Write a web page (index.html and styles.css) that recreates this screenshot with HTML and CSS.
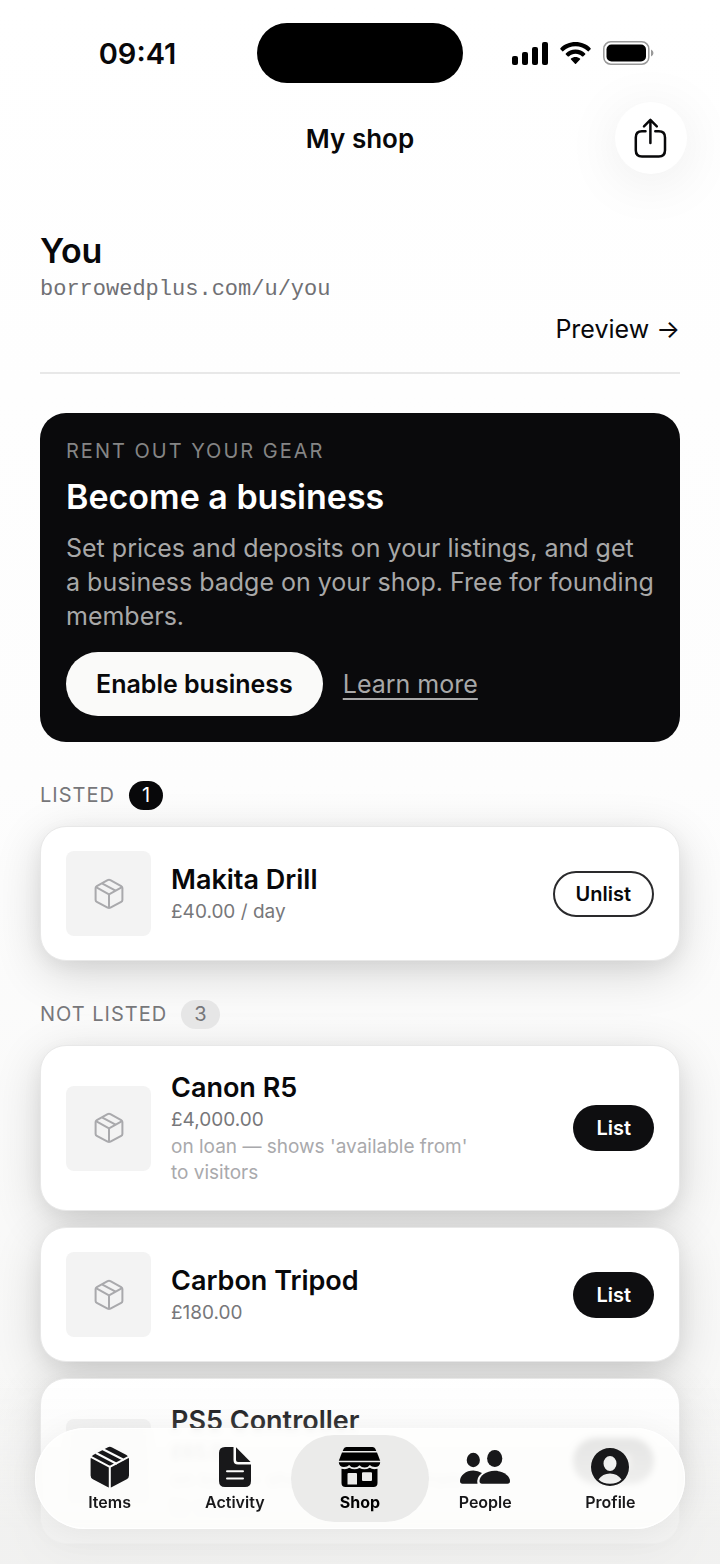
FILE: index.html
```html
<!DOCTYPE html>
<html lang="en">
<head>
    <meta charset="UTF-8">
    <meta name="viewport" content="width=device-width, initial-scale=1.0">
    <title>My shop</title>
    <link rel="stylesheet" href="styles.css">
</head>
<body>
    <!-- Shared icons -->
    <svg class="sprite" aria-hidden="true">
        <symbol id="box" viewBox="0 0 30 32">
            <path d="M13.6 2.2 2.8 8.1Q1.6 8.8 1.6 10.1V21.9Q1.6 23.2 2.8 23.8L13.6 29.7Q15 30.4 16.4 29.7L27.2 23.8Q28.4 23.2 28.4 21.9V10.1Q28.4 8.8 27.2 8.1L16.4 2.2Q15 1.5 13.6 2.2Z"/>
            <path d="M2 9.2 15 16.3 28 9.2M15 16.3V30M8.4 5.6 21.6 12.7"/>
        </symbol>
    </svg>

    <div class="status-bar">
        <span class="time">09:41</span>
        <span class="island"></span>
        <span class="status-icons">
            <svg width="36" height="23" viewBox="0 0 36 23">
                <rect x="0" y="14" width="6" height="9" rx="2"/>
                <rect x="10" y="10" width="6" height="13" rx="2"/>
                <rect x="20" y="5" width="6" height="18" rx="2"/>
                <rect x="30" y="0" width="6" height="23" rx="2"/>
            </svg>
            <svg width="31" height="23" viewBox="0 0 31 23">
                <path d="M15.5 0C9.5 0 4 2.3 0.4 6.2Q0 6.7 0.4 7.2L2.4 9.2Q2.9 9.6 3.4 9.1C6.6 5.9 10.9 4.3 15.5 4.3S24.4 5.9 27.6 9.1Q28.1 9.6 28.6 9.2L30.6 7.2Q31 6.7 30.6 6.2C27 2.3 21.5 0 15.5 0Z"/>
                <path d="M15.5 7.5C11.7 7.5 8.3 9 5.8 11.4Q5.4 11.9 5.8 12.4L7.9 14.4Q8.4 14.8 8.9 14.4C10.7 12.8 13 11.8 15.5 11.8S20.3 12.8 22.1 14.4Q22.6 14.8 23.1 14.4L25.2 12.4Q25.6 11.9 25.2 11.4C22.7 9 19.3 7.5 15.5 7.5Z"/>
                <path d="M15.5 15C13.7 15 12.2 15.6 11 16.6Q10.5 17.1 11 17.6L15 21.7Q15.5 22.2 16 21.7L20 17.6Q20.5 17.1 20 16.6C18.8 15.6 17.3 15 15.5 15Z"/>
            </svg>
            <svg width="51" height="24" viewBox="0 0 51 24">
                <rect x="0.8" y="0.8" width="45" height="22.4" rx="7" fill="none" stroke="#999" stroke-width="1.5"/>
                <rect x="3.5" y="3.5" width="39.5" height="17" rx="5"/>
                <path d="M48 8.5Q50.5 9.5 50.5 12T48 15.5Z" fill="#999"/>
            </svg>
        </span>
    </div>

    <header class="nav-bar">
        <h1>My shop</h1>
        <button class="share" aria-label="Share">
            <svg width="34" height="40" viewBox="0 0 34 40">
                <path d="M11.5 13.2H8Q1.8 13.2 1.8 19.4V32.2Q1.8 38.4 8 38.4H24.8Q31 38.4 31 32.2V19.4Q31 13.2 24.8 13.2H21.3M16.4 25V2.2M10 8.3 16.4 1.9 22.8 8.3"/>
            </svg>
        </button>
    </header>

    <main>
        <section class="owner">
            <h2>You</h2>
            <p class="url">borrowedplus.com/u/you</p>
            <a class="preview" href="#">Preview →</a>
        </section>

        <section class="promo">
            <p class="eyebrow">RENT OUT YOUR GEAR</p>
            <h2>Become a business</h2>
            <p class="promo-text">Set prices and deposits on your listings, and get a business badge on your shop. Free for founding members.</p>
            <div class="promo-actions">
                <button class="enable">Enable business</button>
                <a href="#">Learn more</a>
            </div>
        </section>

        <section class="group">
            <h3>LISTED <span class="count dark">1</span></h3>
            <article class="card">
                <div class="thumb"><svg><use href="#box"/></svg></div>
                <div class="info">
                    <h4>Makita Drill</h4>
                    <p class="price">£40.00 / day</p>
                </div>
                <button class="pill outline">Unlist</button>
            </article>
        </section>

        <section class="group">
            <h3>NOT LISTED <span class="count">3</span></h3>
            <article class="card">
                <div class="thumb"><svg><use href="#box"/></svg></div>
                <div class="info">
                    <h4>Canon R5</h4>
                    <p class="price">£4,000.00</p>
                    <p class="note">on loan — shows 'available from' to visitors</p>
                </div>
                <button class="pill">List</button>
            </article>
            <article class="card">
                <div class="thumb"><svg><use href="#box"/></svg></div>
                <div class="info">
                    <h4>Carbon Tripod</h4>
                    <p class="price">£180.00</p>
                </div>
                <button class="pill">List</button>
            </article>
            <article class="card">
                <div class="thumb"><svg><use href="#box"/></svg></div>
                <div class="info">
                    <h4>PS5 Controller</h4>
                    <p class="price">£65.00</p>
                    <p class="note">on loan — shows 'available from' to visitors</p>
                </div>
                <button class="pill">List</button>
            </article>
        </section>
    </main>

    <div class="fade"></div>

    <nav class="tab-bar">
        <a href="#">
            <svg width="40" height="42" viewBox="0 0 40 42">
                <path d="M17.5 1.4Q19.8 0.3 22.1 1.4L36.5 9Q39 10.4 39 13V29.5Q39 32 36.7 33.2L22 40.9Q19.8 42 17.6 40.9L2.9 33.2Q0.6 32 0.6 29.5V13Q0.6 10.4 3.1 9Z"/>
                <path class="cut" d="M0 10.3 19.8 20.8 39.6 10.3M19.8 20.8V42M6 7 27 18M12.5 3 34 14"/>
            </svg>
            Items
        </a>
        <a href="#">
            <svg width="34" height="42" viewBox="0 0 34 42">
                <path d="M7 1H15.5V14Q15.5 18.5 20 18.5H33V35Q33 41 27 41H7Q1 41 1 35V7Q1 1 7 1Z"/>
                <path d="M18 1.2 32.6 16H20Q18 16 18 14Z"/>
                <path class="cut" d="M9 25.2H25M9 32.4H25" stroke-linecap="round"/>
            </svg>
            Activity
        </a>
        <a class="active" href="#">
            <svg width="43" height="42" viewBox="0 0 43 42">
                <path d="M8.5 1H34.5Q36.5 1 37.3 2.8L38.3 5H4.7L5.7 2.8Q6.5 1 8.5 1Z"/>
                <path d="M4 6.5H39L42.2 14.8H0.8Z"/>
                <path d="M0.8 16.3H42.2Q42 21 37 21 33.5 21 31.8 19 30 21.5 26.7 21.5 23.5 21.5 21.5 19.2 19.5 21.5 16.3 21.5 13 21.5 11.2 19 9.5 21 6 21 1 21 0.8 16.3Z"/>
                <path fill-rule="evenodd" d="M3.5 22.8Q8.5 24 11.2 21.8 16.5 24.8 21.5 22 26.5 24.8 31.8 21.8 34.5 24 39.5 22.8V37Q39.5 41 35.5 41H7.5Q3.5 41 3.5 37ZM10.5 27Q9.5 27 9.5 28V38.5H19V28Q19 27 18 27ZM25 26.2Q24 26.2 24 27.2V34Q24 35 25 35H33Q34 35 34 34V27.2Q34 26.2 33 26.2Z"/>
            </svg>
            Shop
        </a>
        <a href="#">
            <svg width="52" height="42" viewBox="0 0 52 42">
                <ellipse cx="14.3" cy="14" rx="6.6" ry="7.2"/>
                <ellipse cx="35.7" cy="12.5" rx="7.6" ry="8.5"/>
                <path d="M14.3 24.5C7 24.5 1 29.5 1 35Q1 37.7 3.5 37.7H18.5Q17 32 23 27 19 24.5 14.3 24.5Z"/>
                <path d="M35.7 24.8C27 24.8 20.5 30 20.5 35Q20.5 37.7 23 37.7H48.5Q51 37.7 51 35C51 30 44.5 24.8 35.7 24.8Z"/>
            </svg>
            People
        </a>
        <a href="#">
            <svg width="40" height="42" viewBox="0 0 40 42">
                <path fill-rule="evenodd" d="M20 2A19 19 0 1 0 20 40A19 19 0 1 0 20 2ZM20 10A6.5 7.5 0 1 1 20 25A6.5 7.5 0 1 1 20 10ZM8.5 33.5Q12.5 27.5 20 27.5T31.5 33.5Q27 37.8 20 37.8T8.5 33.5Z"/>
            </svg>
            Profile
        </a>
    </nav>
</body>
</html>
```
FILE: styles.css
```css
* {
    box-sizing: border-box;
}

body {
    margin: 0;
    font-family: Inter, "Liberation Sans", sans-serif;
    color: #08080a;
    background: linear-gradient(#fff, #fdfdfd 50%, #f6f6f5);
}

h1, h2, h3, h4, p {
    margin: 0;
}

button {
    border: none;
    padding: 0;
    font-family: inherit;
    font-weight: 600;
    cursor: pointer;
}

a {
    color: inherit;
}

.sprite {
    position: absolute;
    width: 0;
    height: 0;
}

/* Status bar */
.status-bar {
    display: grid;
    grid-template-columns: 1fr 206px 1fr;
    align-items: center;
    justify-items: center;
    padding: 23px 18px 0;
}

.time {
    font-size: 29px;
    font-weight: 600;
}

.island {
    width: 100%;
    height: 60px;
    border-radius: 30px;
    background: #000;
}

.status-icons {
    display: flex;
    align-items: center;
    gap: 12px;
}

/* Title and share button */
.nav-bar {
    display: grid;
    grid-template-columns: 1fr auto 1fr;
    align-items: center;
    padding: 19px 33px 0;
}

.nav-bar h1 {
    grid-column: 2;
    font-size: 26px;
    font-weight: 600;
}

.share {
    display: flex;
    align-items: center;
    justify-content: center;
    justify-self: end;
    width: 72px;
    height: 72px;
    border-radius: 50%;
    background: #fff;
    box-shadow: 0 8px 56px rgba(0, 0, 0, 0.08);
}

.share svg {
    fill: none;
    stroke: #08080a;
    stroke-width: 2.5;
    stroke-linecap: round;
    stroke-linejoin: round;
}

main {
    padding: 55px 40px 20px;
}

/* Shop owner */
.owner {
    display: flex;
    flex-direction: column;
    padding-bottom: 25px;
    border-bottom: 2px solid #e8e8e8;
}

.owner h2 {
    font-size: 34px;
    font-weight: 600;
    line-height: 44px;
}

.url {
    font-family: "Liberation Mono", monospace;
    font-size: 22px;
    line-height: 34px;
    color: #707074;
}

.preview {
    align-self: flex-end;
    margin-top: 4px;
    font-size: 25px;
    line-height: 36px;
    text-decoration: none;
}

/* Business promo */
.promo {
    display: flex;
    flex-direction: column;
    gap: 12px;
    margin-top: 39px;
    padding: 26px;
    border-radius: 26px;
    background: #0a0a0c;
    color: #fff;
}

.eyebrow {
    font-size: 20px;
    line-height: 24px;
    letter-spacing: 2px;
    color: #858585;
}

.promo h2 {
    font-size: 34px;
    font-weight: 600;
    line-height: 44px;
}

.promo-text {
    font-size: 25px;
    line-height: 34px;
    color: #a8a8a8;
}

.promo-actions {
    display: flex;
    align-items: center;
    gap: 20px;
    margin-top: 7px;
    font-size: 25px;
    color: #a8a8a8;
}

.promo-actions a {
    text-underline-offset: 5px;
    text-decoration-thickness: 2px;
}

.enable {
    height: 64px;
    padding: 0 30px;
    border-radius: 32px;
    background: #fafaf9;
    color: #08080a;
    font-size: 25px;
}

/* Item groups */
.group {
    display: flex;
    flex-direction: column;
    gap: 16px;
    margin-top: 39px;
    position: relative;
    z-index: 0;
}

.group h3 {
    display: flex;
    align-items: center;
    gap: 14px;
    font-size: 20px;
    font-weight: 400;
    line-height: 29px;
    letter-spacing: 1px;
    color: #77777a;
}

.count {
    padding: 0 13px;
    border-radius: 15px;
    background: #e6e6e6;
    letter-spacing: 0;
}

.count.dark {
    background: #08080a;
    color: #fff;
}

.card {
    display: flex;
    align-items: center;
    gap: 20px;
    position: relative;
    padding: 24px 25px;
    border: 1px solid #e8e8e8;
    border-radius: 26px;
    background: #fff;
}

/* Shadows sit behind every card in the group */
.card::before {
    content: "";
    position: absolute;
    inset: 0;
    z-index: -1;
    border-radius: 26px;
    box-shadow: 0 12px 48px rgba(0, 0, 0, 0.16), 0 6px 20px rgba(0, 0, 0, 0.06);
}

.thumb {
    display: flex;
    align-items: center;
    justify-content: center;
    flex: none;
    width: 85px;
    height: 85px;
    border-radius: 8px;
    background: #f3f3f3;
}

.thumb svg {
    width: 30px;
    height: 32px;
    fill: none;
    stroke: #a9a9ac;
    stroke-width: 2;
    stroke-linejoin: round;
}

.info {
    flex: 1;
}

.info h4 {
    font-size: 27px;
    font-weight: 600;
    line-height: 36px;
}

.price {
    font-size: 19px;
    line-height: 28px;
    color: #77777a;
}

.note {
    max-width: 310px;
    font-size: 19px;
    line-height: 26px;
    color: #a9a9ac;
}

.pill {
    height: 46px;
    padding: 0 23px;
    border-radius: 23px;
    background: #0e0e10;
    color: #fff;
    font-size: 20px;
}

.pill.outline {
    padding: 0 21px;
    border: 2px solid #2a2a2c;
    background: #fff;
    color: #08080a;
}

/* Bottom fade and tab bar */
.fade {
    position: fixed;
    left: 0;
    right: 0;
    bottom: 0;
    height: 186px;
    background: linear-gradient(rgba(240, 240, 239, 0), rgba(240, 240, 239, 0.2) 25%, rgba(240, 240, 239, 0.85) 80%);
    pointer-events: none;
}

.tab-bar {
    position: fixed;
    left: 35px;
    right: 35px;
    bottom: 35px;
    display: grid;
    grid-template-columns: repeat(5, 1fr);
    padding: 7px 12px;
    border-radius: 51px;
    background: rgba(254, 254, 253, 0.86);
    backdrop-filter: blur(3px);
    box-shadow: 0 4px 32px rgba(0, 0, 0, 0.06), inset 0 0 0 1px #fff;
}

.tab-bar a {
    display: flex;
    flex-direction: column;
    align-items: center;
    gap: 3px;
    height: 87px;
    padding-top: 11px;
    border-radius: 44px;
    font-size: 16px;
    font-weight: 600;
    line-height: 22px;
    color: #18181a;
    text-decoration: none;
}

.tab-bar svg {
    fill: currentColor;
}

.tab-bar .cut {
    fill: none;
    stroke: #fdfdfc;
    stroke-width: 2;
}

.tab-bar .active {
    margin: 0 -6px;
    background: #ebebea;
    color: #000;
    font-weight: 700;
}
```
